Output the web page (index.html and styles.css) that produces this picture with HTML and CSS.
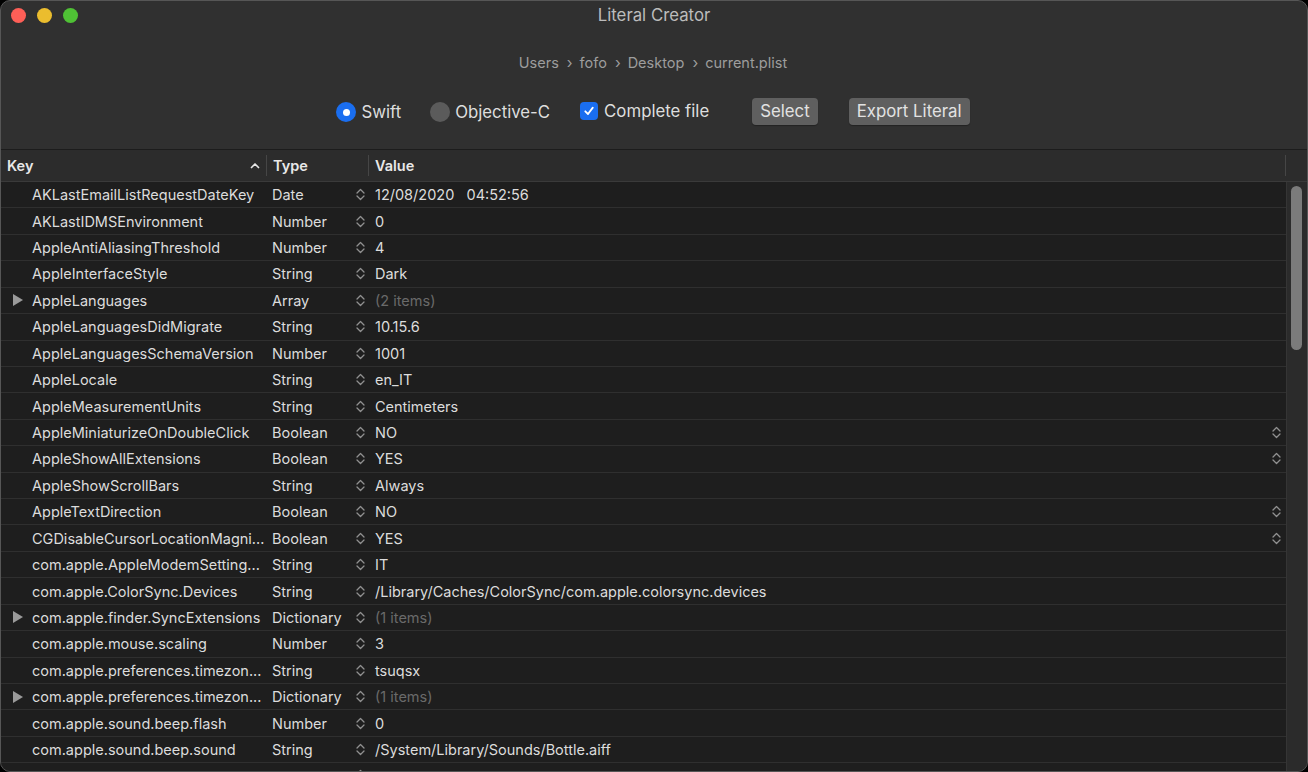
FILE: index.html
```html
<!DOCTYPE html>
<html lang="en">
<head>
    <meta charset="UTF-8">
    <title>Literal Creator</title>
    <link rel="stylesheet" href="styles.css">
</head>
<body>
    <div class="window">
        <div class="titlebar">
            <div class="lights">
                <span class="light red"></span>
                <span class="light yellow"></span>
                <span class="light green"></span>
            </div>
            <div class="title">Literal Creator</div>
        </div>

        <div class="path">
            <span>Users</span><span class="sep">&#8250;</span>
            <span>fofo</span><span class="sep">&#8250;</span>
            <span>Desktop</span><span class="sep">&#8250;</span>
            <span>current.plist</span>
        </div>

        <div class="controls">
            <label class="radio on"><span class="dot"></span>Swift</label>
            <label class="radio"><span class="dot"></span>Objective-C</label>
            <label class="check">
                <span class="box">
                    <svg width="12" height="12" viewBox="0 0 12 12"><path d="M2.3 6.3 L5 9 L9.8 2.6" fill="none" stroke="#fff" stroke-width="1.8" stroke-linecap="round" stroke-linejoin="round"/></svg>
                </span>Complete file
            </label>
            <button class="btn btn-select">Select</button>
            <button class="btn">Export Literal</button>
        </div>

        <div class="table">
            <div class="thead">
                <div class="th key">Key
                    <svg class="sort" width="10" height="7" viewBox="0 0 10 7"><path d="M1.5 5.5 L5 2 L8.5 5.5" fill="none" stroke="#e6e6e6" stroke-width="1.7" stroke-linecap="round" stroke-linejoin="round"/></svg>
                </div>
                <div class="th type">Type</div>
                <div class="th value">Value</div>
                <div class="th gutter"></div>
            </div>

            <div class="tbody">
                <div class="rows">
                    <div class="row"><div class="c key">AKLastEmailListRequestDateKey</div><div class="c type">Date<i class="step"></i></div><div class="c value">12/08/2020&nbsp;&nbsp;&nbsp;04:52:56</div></div>
                    <div class="row"><div class="c key">AKLastIDMSEnvironment</div><div class="c type">Number<i class="step"></i></div><div class="c value">0</div></div>
                    <div class="row"><div class="c key">AppleAntiAliasingThreshold</div><div class="c type">Number<i class="step"></i></div><div class="c value">4</div></div>
                    <div class="row"><div class="c key">AppleInterfaceStyle</div><div class="c type">String<i class="step"></i></div><div class="c value">Dark</div></div>
                    <div class="row"><div class="c key"><i class="tri"></i>AppleLanguages</div><div class="c type">Array<i class="step"></i></div><div class="c value muted">(2 items)</div></div>
                    <div class="row"><div class="c key">AppleLanguagesDidMigrate</div><div class="c type">String<i class="step"></i></div><div class="c value">10.15.6</div></div>
                    <div class="row"><div class="c key">AppleLanguagesSchemaVersion</div><div class="c type">Number<i class="step"></i></div><div class="c value">1001</div></div>
                    <div class="row"><div class="c key">AppleLocale</div><div class="c type">String<i class="step"></i></div><div class="c value">en_IT</div></div>
                    <div class="row"><div class="c key">AppleMeasurementUnits</div><div class="c type">String<i class="step"></i></div><div class="c value">Centimeters</div></div>
                    <div class="row"><div class="c key">AppleMiniaturizeOnDoubleClick</div><div class="c type">Boolean<i class="step"></i></div><div class="c value">NO<i class="step"></i></div></div>
                    <div class="row"><div class="c key">AppleShowAllExtensions</div><div class="c type">Boolean<i class="step"></i></div><div class="c value">YES<i class="step"></i></div></div>
                    <div class="row"><div class="c key">AppleShowScrollBars</div><div class="c type">String<i class="step"></i></div><div class="c value">Always</div></div>
                    <div class="row"><div class="c key">AppleTextDirection</div><div class="c type">Boolean<i class="step"></i></div><div class="c value">NO<i class="step"></i></div></div>
                    <div class="row"><div class="c key">CGDisableCursorLocationMagni...</div><div class="c type">Boolean<i class="step"></i></div><div class="c value">YES<i class="step"></i></div></div>
                    <div class="row"><div class="c key">com.apple.AppleModemSetting...</div><div class="c type">String<i class="step"></i></div><div class="c value">IT</div></div>
                    <div class="row"><div class="c key">com.apple.ColorSync.Devices</div><div class="c type">String<i class="step"></i></div><div class="c value">/Library/Caches/ColorSync/com.apple.colorsync.devices</div></div>
                    <div class="row"><div class="c key"><i class="tri"></i>com.apple.finder.SyncExtensions</div><div class="c type">Dictionary<i class="step"></i></div><div class="c value muted">(1 items)</div></div>
                    <div class="row"><div class="c key">com.apple.mouse.scaling</div><div class="c type">Number<i class="step"></i></div><div class="c value">3</div></div>
                    <div class="row"><div class="c key">com.apple.preferences.timezon...</div><div class="c type">String<i class="step"></i></div><div class="c value">tsuqsx</div></div>
                    <div class="row"><div class="c key"><i class="tri"></i>com.apple.preferences.timezon...</div><div class="c type">Dictionary<i class="step"></i></div><div class="c value muted">(1 items)</div></div>
                    <div class="row"><div class="c key">com.apple.sound.beep.flash</div><div class="c type">Number<i class="step"></i></div><div class="c value">0</div></div>
                    <div class="row"><div class="c key">com.apple.sound.beep.sound</div><div class="c type">String<i class="step"></i></div><div class="c value">/System/Library/Sounds/Bottle.aiff</div></div>
                    <div class="row"><div class="c key"></div><div class="c type"><i></i><i class="step"></i></div><div class="c value"></div></div>
                </div>
                <div class="scrollbar"><div class="thumb"></div></div>
            </div>
        </div>
    </div>
</body>
</html>
```

FILE: styles.css
```css
* {
    box-sizing: border-box;
}

body {
    margin: 0;
    background: #000;
    font-family: "Inter", "Liberation Sans", sans-serif;
    font-size: 14.5px;
    overflow: hidden;
}

.window {
    width: 1308px;
    height: 772px;
    display: flex;
    flex-direction: column;
    background: #303030;
    border: 1px solid #565656;
    border-radius: 10px;
    overflow: hidden;
}

/* title bar */
.titlebar {
    position: relative;
    height: 30px;
    display: flex;
    align-items: center;
    justify-content: center;
}

.lights {
    position: absolute;
    left: 10px;
    top: 7px;
    display: flex;
    gap: 11px;
}

.light {
    width: 15px;
    height: 15px;
    border-radius: 50%;
}
.light.red { background: #fe5f57; }
.light.yellow { background: #ebbd2e; }
.light.green { background: #4fc135; }

.title {
    color: #bcbcbc;
    font-size: 16.8px;
    margin-top: -2px;
    padding-left: 0;
}

/* path */
.path {
    margin-top: 20px;
    height: 22px;
    display: flex;
    justify-content: center;
    align-items: center;
    color: #9d9d9d;
    font-size: 14.5px;
    padding-right: 2px;
}
.path .sep {
    margin: 0 7px 0 8px;
    font-size: 15px;
}

/* controls */
.controls {
    margin-top: 24px;
    height: 30px;
    display: flex;
    justify-content: center;
    align-items: center;
    color: #dedede;
    font-size: 16.8px;
    padding-right: 2px;
}

.radio {
    display: flex;
    align-items: center;
    margin-right: 29px;
}
.radio .dot {
    width: 20px;
    height: 20px;
    border-radius: 50%;
    background: #5b5b5b;
    margin-right: 5px;
    position: relative;
}
.radio.on .dot {
    background: #1a6ef0;
}
.radio.on .dot::after {
    content: "";
    position: absolute;
    left: 6.5px;
    top: 6.5px;
    width: 7px;
    height: 7px;
    border-radius: 50%;
    background: #fff;
}

.check {
    display: flex;
    align-items: center;
    margin-left: 1px;
    margin-right: 43px;
    margin-top: -2px;
}
.check .box {
    width: 18px;
    height: 18px;
    border-radius: 4px;
    background: #1a6ef0;
    display: flex;
    align-items: center;
    justify-content: center;
    margin-right: 6px;
}

.btn {
    font-family: inherit;
    font-size: 16.8px;
    color: #e2e2e2;
    background: #5f5f5f;
    border: none;
    border-radius: 4px;
    height: 27px;
    padding: 0 8px;
    margin-top: -2px;
    box-shadow: 0 1px 1px rgba(0, 0, 0, 0.3);
}
.btn-select {
    margin-right: 31px;
}

/* table */
.table {
    margin-top: 22px;
    flex: 1;
    display: flex;
    flex-direction: column;
    border-top: 1px solid #1c1c1c;
    min-height: 0;
}

.thead {
    height: 32px;
    flex-shrink: 0;
    display: flex;
    background: #2c2c2c;
    border-bottom: 1px solid #3a3a3a;
    color: #e8e8e8;
    font-weight: 600;
    font-size: 14.5px;
}

.th {
    display: flex;
    align-items: center;
    border-right: 1px solid #464646;
    margin: 5px 0;
}
.th.key {
    width: 266px;
    padding: 0 6px;
    justify-content: space-between;
}
.th.type {
    width: 102px;
    padding-left: 6px;
}
.th.value {
    width: 917px;
    padding-left: 6px;
}
.th.gutter {
    flex: 1;
    border-right: none;
}

.tbody {
    flex: 1;
    display: flex;
    min-height: 0;
    overflow: hidden;
}

.rows {
    width: 1285px;
    background: #1e1e1e;
}

.row {
    height: 26.43px;
    display: flex;
    align-items: center;
    border-bottom: 1px solid #2f2f2f;
    color: #dcdcdc;
}

.c {
    display: flex;
    align-items: center;
    white-space: nowrap;
    overflow: hidden;
}
.c.key {
    width: 266px;
    padding-left: 31px;
    position: relative;
}
.c.type {
    width: 102px;
    padding-left: 5px;
    justify-content: space-between;
    padding-right: 4px;
}
.c.value {
    flex: 1;
    padding-left: 6px;
    justify-content: space-between;
    padding-right: 5px;
}
.c.value.muted {
    color: #6a6a6a;
}

.tri {
    position: absolute;
    left: 12px;
    top: 50%;
    margin-top: -6px;
    width: 0;
    height: 0;
    border-left: 10px solid #9a9a9a;
    border-top: 6px solid transparent;
    border-bottom: 6px solid transparent;
}

.step {
    width: 9px;
    height: 13px;
    background: url("data:image/svg+xml;utf8,<svg xmlns='http://www.w3.org/2000/svg' width='9' height='13' viewBox='0 0 9 13'><path d='M1 5 L4.5 1.5 L8 5 M1 8 L4.5 11.5 L8 8' fill='none' stroke='%23909090' stroke-width='1.3' stroke-linecap='round' stroke-linejoin='round'/></svg>") no-repeat center;
}

.scrollbar {
    flex: 1;
    background: #2b2b2b;
    border-left: 1px solid #353535;
    padding: 4px 4px 0 4px;
}
.thumb {
    width: 11px;
    height: 164px;
    background: #7b7b7b;
    border-radius: 6px;
}
```
